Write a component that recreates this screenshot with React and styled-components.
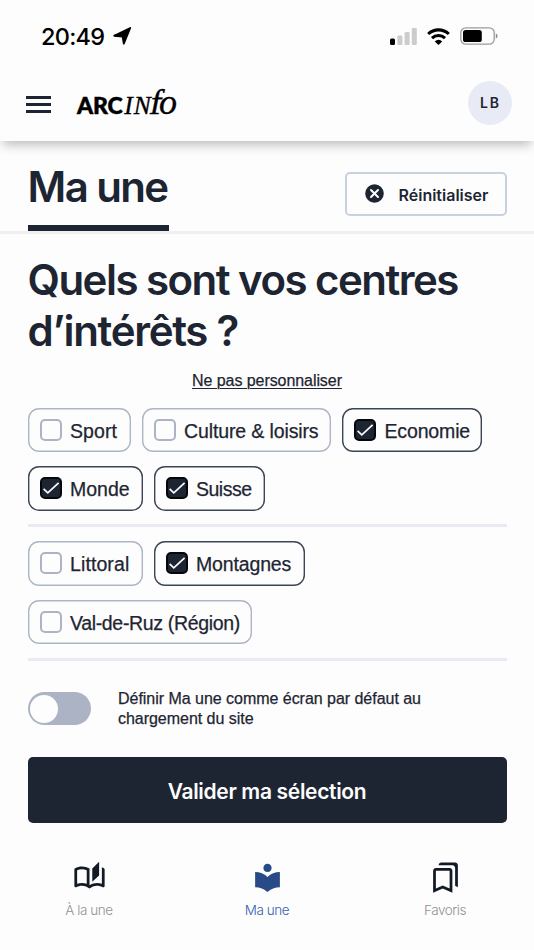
import React from "react";
import styled, { createGlobalStyle } from "styled-components";
import { MdOutlineAutoStories, MdLocalLibrary, MdOutlineBookmarks } from "react-icons/md";

const Global = createGlobalStyle`
  *, *::before, *::after { box-sizing: border-box; }
  body { margin: 0; background: #fdfdfd; font-family: Inter, "Liberation Sans", sans-serif; color: #1e2532; }
  button { font: inherit; color: inherit; background: none; border: 0; padding: 0; }
  h1, h2, p { margin: 0; }
  svg { display: block; flex: none; }
`;

const bodyFace = `
  font-family: "Liberation Sans", Arial, sans-serif;
  -webkit-text-stroke: 0.25px currentColor;
`;

const Screen = styled.div`
  width: 534px;
  height: 950px;
  overflow: hidden;
  display: flex;
  flex-direction: column;
  background: #fdfdfd;
`;

const StatusBar = styled.div`
  height: 72px;
  flex: none;
  display: flex;
  align-items: center;
  padding: 0 36px 0 41px;
  color: #000;
`;

const Clock = styled.span`
  font-size: 23.5px;
  font-weight: 550;
  letter-spacing: -0.75px;
  width: 72px;
  white-space: nowrap;
`;

const StatusIcons = styled.div`
  margin-left: auto;
  display: flex;
  align-items: center;
  gap: 10px;
`;

const Header = styled.header`
  height: 69px;
  flex: none;
  display: flex;
  align-items: center;
  padding: 0 22px 7px 26px;
  box-shadow: 0 7px 10px -3px rgba(0, 0, 0, 0.25);
`;

const MenuButton = styled.button`
  width: 25px;
  height: 17px;
  margin-top: 3px;
  display: flex;
  flex-direction: column;
  justify-content: space-between;
`;

const MenuLine = styled.span`
  height: 2.6px;
  background: #1e2532;
`;

const Logo = styled.div`
  display: flex;
  align-items: baseline;
  margin: 2.5px 0 0 26px;
  color: #000;
  line-height: 32px;
  white-space: nowrap;
`;

const LogoBold = styled.span`
  font-family: Lato, sans-serif;
  font-weight: 900;
  font-size: 23px;
  letter-spacing: -0.1px;
  -webkit-text-stroke: 0.5px #000;
`;

const LogoSerif = styled.span`
  font-family: "Liberation Serif", serif;
  font-style: italic;
  font-size: ${(p) => p.$size}px;
  letter-spacing: ${(p) => p.$track}px;
  margin-left: ${(p) => p.$left}px;
  -webkit-text-stroke: 0.35px #000;
`;

const LogoTallF = styled(LogoSerif)`
  font-style: normal;
  transform: skewX(-11deg);
  transform-origin: 50% 75%;
`;

const Avatar = styled.div`
  width: 44px;
  height: 44px;
  margin-left: auto;
  border-radius: 50%;
  background: #e8eaf6;
  display: grid;
  place-items: center;
  font-size: 14px;
  font-weight: 600;
  letter-spacing: 2px;
  padding: 0 0 2px 1px;
`;

const TitleRow = styled.section`
  height: 93px;
  flex: none;
  display: flex;
  justify-content: space-between;
  padding: 0 27.5px;
  border-bottom: 3px solid #f0f0f2;
`;

const Title = styled.h1`
  width: 141px;
  height: 90px;
  border-bottom: 6px solid #1e2532;
  padding-top: 20px;
  font-size: 42px;
  line-height: 52px;
  font-weight: 600;
  letter-spacing: -1.6px;
  white-space: nowrap;
`;

const ResetButton = styled.button`
  width: 162px;
  height: 44px;
  margin-top: 30.5px;
  border: 2px solid #c8d1e0;
  border-radius: 5px;
  display: flex;
  align-items: center;
  padding-left: 18px;
  gap: 15px;
  font-size: 16px;
  font-weight: 600;
  white-space: nowrap;
  letter-spacing: 0;
`;

const ResetText = styled.span`
  margin-top: 3px;
`;

const Main = styled.main`
  flex: none;
  padding: 0 27.5px;
  display: flex;
  flex-direction: column;
`;

const Question = styled.h2`
  margin-top: 19.5px;
  font-size: 42px;
  line-height: 51.5px;
  font-weight: 600;
  white-space: nowrap;
`;

const QuestionLine = styled.span`
  display: block;
  letter-spacing: ${(p) => p.$track}px;
`;

const SkipLink = styled.a`
  ${bodyFace}
  align-self: center;
  margin-top: 14px;
  height: 20px;
  line-height: 20px;
  font-size: 16px;
  letter-spacing: -0.07px;
  text-decoration: underline;
  text-underline-offset: 2px;
  text-decoration-thickness: 1px;
`;

const ChipGroup = styled.div`
  display: flex;
  flex-wrap: wrap;
  gap: 14px 11px;
  margin-top: ${(p) => p.$top}px;
  padding-bottom: 13.5px;
  border-bottom: 3px solid #e8eaf6;
`;

const Chip = styled.label`
  ${bodyFace}
  width: ${(p) => p.$width}px;
  height: 44.5px;
  box-shadow: inset 0 0 0 1.4px ${(p) => (p.$on ? "#3c4556" : "#adb5c6")};
  border-radius: 11px;
  display: flex;
  align-items: center;
  padding-left: 12px;
  gap: 8.5px;
  font-size: 19.5px;
  white-space: nowrap;
`;

const Box = styled.span`
  width: 22px;
  height: 22px;
  flex: none;
  border: 2px solid ${(p) => (p.$on ? "#04070c" : "#abb3c4")};
  border-radius: 5px;
  background: ${(p) => (p.$on ? "#1e2532" : "#fdfdfd")};
`;

const ChipText = styled.span`
  margin-top: 3px;
  letter-spacing: ${(p) => p.$track}px;
`;

const DefaultRow = styled.div`
  display: flex;
  align-items: center;
  height: 44px;
  margin-top: 26px;
`;

const Toggle = styled.button`
  width: 63px;
  height: 33px;
  border-radius: 17px;
  background: #abb3c4;
  padding: 0 2.5px;
  display: flex;
  align-items: center;
`;

const Knob = styled.span`
  width: 28px;
  height: 28px;
  border-radius: 50%;
  background: #fdfdfd;
`;

const DefaultText = styled.p`
  ${bodyFace}
  margin: 1px 0 0 27.5px;
  font-size: 16px;
  line-height: 20.5px;
  letter-spacing: -0.03px;
  white-space: nowrap;
`;

const Submit = styled.button`
  margin-top: 26.5px;
  height: 65.5px;
  border-radius: 5px;
  background: #1e2532;
  color: #fdfdfd;
  font-size: 21px;
  font-weight: 600;
  letter-spacing: -0.33px;
  padding-top: 4px;
`;

const Nav = styled.nav`
  display: grid;
  grid-template-columns: repeat(3, 1fr);
  padding-top: 38px;
`;

const NavItem = styled.a`
  display: flex;
  flex-direction: column;
  align-items: center;
  gap: 6.5px;
  font-size: 13.5px;
  font-weight: 350;
  letter-spacing: -0.45px;
  line-height: 20px;
  color: ${(p) => (p.$active ? "#3462b0" : "#929292")};
  svg { color: ${(p) => (p.$active ? "#284b87" : "#121a26")}; }
`;

const LocationIcon = () => (
  <svg width="19" height="18" viewBox="0 0 19 18">
    <path d="M17.2 1 10.8 16.6 9.6 9.6 1.2 8.8Z" fill="#000" stroke="#000" strokeWidth="1.9" strokeLinejoin="round" />
  </svg>
);

const SignalIcon = () => (
  <svg width="27" height="17" viewBox="0 0 27 17">
    <rect x="0" y="10.5" width="5" height="6.5" rx="1.5" fill="#000" />
    <rect x="7.4" y="7.5" width="5" height="9.5" rx="1.3" fill="#ccc" />
    <rect x="14.6" y="4" width="5" height="13" rx="1.3" fill="#ccc" />
    <rect x="21.8" y="0" width="5" height="17" rx="1.3" fill="#ccc" />
  </svg>
);

const WifiIcon = () => (
  <svg width="23" height="17" viewBox="0 0 23 17" fill="none" stroke="#000" strokeWidth="3.1">
    <path d="M1.2 6a14.8 14.8 0 0 1 20.6 0" />
    <path d="M5 10.2a9.3 9.3 0 0 1 13 0" />
    <path d="M11.5 17 7.8 13.4a5.2 5.2 0 0 1 7.4 0Z" fill="#000" stroke="none" />
  </svg>
);

const BatteryIcon = () => (
  <svg width="38" height="18" viewBox="0 0 38 18">
    <rect x="0.8" y="0.8" width="33.4" height="16.4" rx="5" fill="none" stroke="#9b9b9b" strokeWidth="1.3" />
    <rect x="3" y="3" width="18.8" height="12" rx="2.6" fill="#000" />
    <path d="M35.8 6.2v5.6q1.8-1 1.8-2.8t-1.8-2.8Z" fill="#8d8d8d" />
  </svg>
);

const ClearIcon = () => (
  <svg width="19" height="19" viewBox="0 0 19 19">
    <circle cx="9.5" cy="9.5" r="9.3" fill="#1e2532" />
    <path d="m6 6 7 7m0-7-7 7" stroke="#fdfdfd" strokeWidth="2" strokeLinecap="round" />
  </svg>
);

const CheckIcon = () => (
  <svg width="18" height="18" viewBox="0 0 18 18">
    <path d="m1.6 9.8 4.2 4L16.6 3.8" fill="none" stroke="#fdfdfd" strokeWidth="1.7" />
  </svg>
);

const themes = [
  { name: "Sport", width: 103, track: 0.1 },
  { name: "Culture & loisirs", width: 189.5, track: -0.12 },
  { name: "Economie", width: 140, track: -0.15, on: true },
  { name: "Monde", width: 115, track: 0, on: true },
  { name: "Suisse", width: 111, track: -0.5, on: true },
];

const regions = [
  { name: "Littoral", width: 115, track: 0.1 },
  { name: "Montagnes", width: 151.5, track: -0.15, on: true },
  { name: "Val-de-Ruz (Région)", width: 224.5, track: -0.34 },
];

const Choices = ({ items, top }) => (
  <ChipGroup $top={top}>
    {items.map((c) => (
      <Chip key={c.name} $width={c.width} $on={c.on}>
        <Box $on={c.on}>{c.on && <CheckIcon />}</Box>
        <ChipText $track={c.track}>{c.name}</ChipText>
      </Chip>
    ))}
  </ChipGroup>
);

export default function App() {
  return (
    <Screen>
      <Global />
      <StatusBar>
        <Clock>20:49</Clock>
        <LocationIcon />
        <StatusIcons>
          <SignalIcon />
          <WifiIcon />
          <BatteryIcon />
        </StatusIcons>
      </StatusBar>
      <Header>
        <MenuButton aria-label="Menu">
          <MenuLine />
          <MenuLine />
          <MenuLine />
        </MenuButton>
        <Logo>
          <LogoBold>ARC</LogoBold>
          <LogoSerif $size={25.5} $track={1} $left={1.5}>IN</LogoSerif>
          <LogoTallF $size={35.5} $track={0} $left={-3}>f</LogoTallF>
          <LogoSerif $size={36} $track={0} $left={-1.5}>o</LogoSerif>
        </Logo>
        <Avatar>LB</Avatar>
      </Header>
      <TitleRow>
        <Title>Ma une</Title>
        <ResetButton>
          <ClearIcon />
          <ResetText>Réinitialiser</ResetText>
        </ResetButton>
      </TitleRow>
      <Main>
        <Question>
          <QuestionLine $track={-1.53}>Quels sont vos centres</QuestionLine>
          <QuestionLine $track={-1.3}>d’intérêts ?</QuestionLine>
        </Question>
        <SkipLink>Ne pas personnaliser</SkipLink>
        <Choices items={themes} top={17} />
        <Choices items={regions} top={14} />
        <DefaultRow>
          <Toggle aria-label="Écran par défaut">
            <Knob />
          </Toggle>
          <DefaultText>
            Définir Ma une comme écran par défaut au
            <br />
            chargement du site
          </DefaultText>
        </DefaultRow>
        <Submit>Valider ma sélection</Submit>
      </Main>
      <Nav>
        <NavItem>
          <MdOutlineAutoStories size={33} />
          À la une
        </NavItem>
        <NavItem $active>
          <MdLocalLibrary size={33} />
          Ma une
        </NavItem>
        <NavItem>
          <MdOutlineBookmarks size={33} />
          Favoris
        </NavItem>
      </Nav>
    </Screen>
  );
}
